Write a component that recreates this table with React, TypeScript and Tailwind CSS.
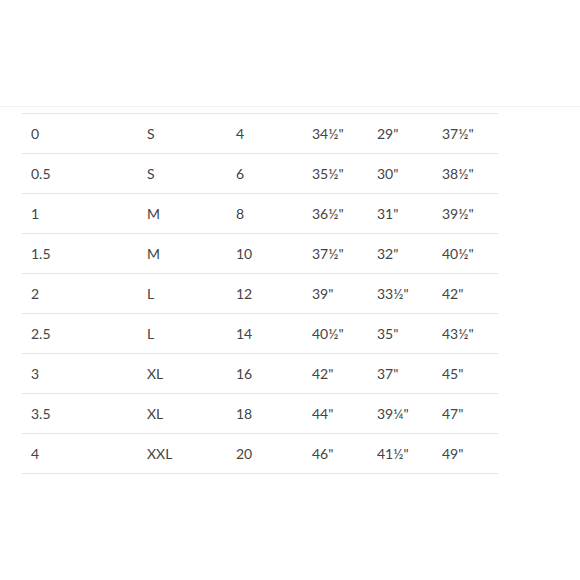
import React from "react";

const rows: string[][] = [
  ["0", "S", "4", "34½\"", "29\"", "37½\""],
  ["0.5", "S", "6", "35½\"", "30\"", "38½\""],
  ["1", "M", "8", "36½\"", "31\"", "39½\""],
  ["1.5", "M", "10", "37½\"", "32\"", "40½\""],
  ["2", "L", "12", "39\"", "33½\"", "42\""],
  ["2.5", "L", "14", "40½\"", "35\"", "43½\""],
  ["3", "XL", "16", "42\"", "37\"", "45\""],
  ["3.5", "XL", "18", "44\"", "39¼\"", "47\""],
  ["4", "XXL", "20", "46\"", "41½\"", "49\""],
];

export default function App() {
  return (
    <div
      className="w-[580px] h-[580px] bg-white overflow-hidden"
      style={{ fontFamily: "Lato, 'Noto Sans', sans-serif" }}
    >
      <div className="h-[106px]" />
      <div className="h-px bg-[#f1f1f1]" />
      <div className="h-[6px]" />
      <div className="ml-[22px] w-[476px] border-t border-[#e6e6e6]">
        {rows.map((r, i) => (
          <div
            key={i}
            className="grid grid-cols-[116px_89px_76px_65px_65px_65px] h-[40px] border-b border-[#e6e6e6] items-center text-[14px] text-[#444]"
          >
            {r.map((c, j) => (
              <div key={j} className="pl-[9px]">
                {c}
              </div>
            ))}
          </div>
        ))}
      </div>
    </div>
  );
}
